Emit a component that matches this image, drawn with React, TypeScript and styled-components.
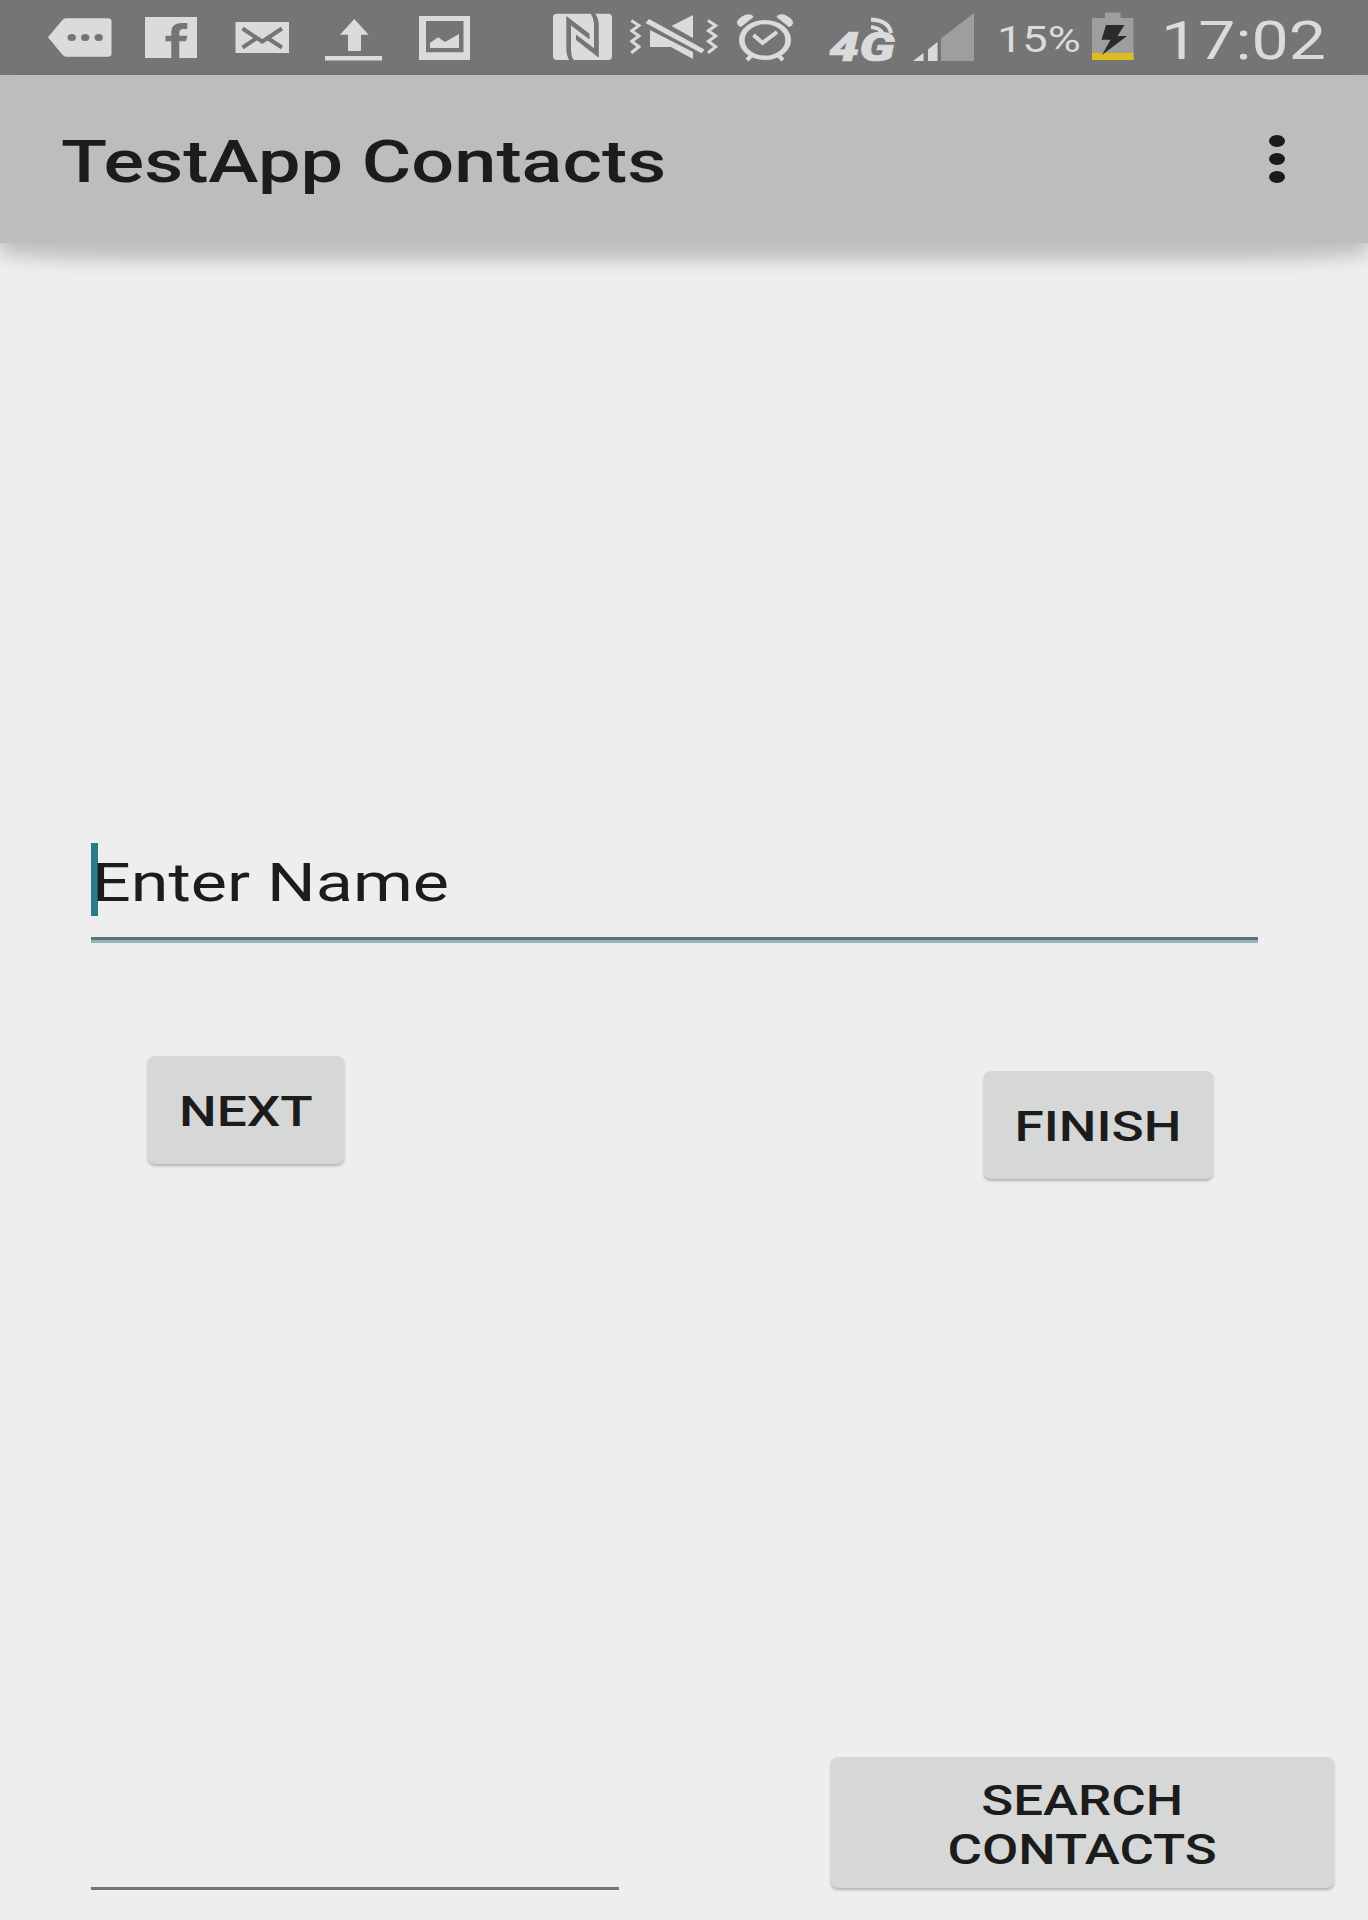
import React from 'react';
import styled, { createGlobalStyle } from 'styled-components';

const LIGHT = '#dbdbdb';
const BAR = '#757575';
const INK = '#1c1c1c';

const GlobalStyle = createGlobalStyle`
  *, *::before, *::after { box-sizing: border-box; }
  body { margin: 0; background: #eeeeee; }
`;

const Screen = styled.div`
  width: 1368px;
  height: 1920px;
  display: flex;
  flex-direction: column;
  overflow: hidden;
  background: #eeeeee;
  color: ${INK};
  font-family: Roboto, "Noto Sans", sans-serif;
`;

const StatusBar = styled.div`
  height: 75px;
  flex: none;
  display: flex;
  background: ${BAR};
  color: ${LIGHT};
`;

const Glyph = styled.svg<{ $gap: number }>`
  flex: none;
  height: 75px;
  margin-left: ${(p) => p.$gap}px;
`;

const Wide = styled.span<{ $origin?: string; $stretch?: number }>`
  display: inline-block;
  white-space: nowrap;
  transform: scaleX(${(p) => p.$stretch ?? 1.2667});
  transform-origin: ${(p) => p.$origin ?? 'left'} center;
`;

const StatusText = styled.div<{ $gap: number; $width: number; $size: number; $top: number }>`
  flex: none;
  margin-left: ${(p) => p.$gap}px;
  width: ${(p) => p.$width}px;
  padding-top: ${(p) => p.$top}px;
  font-size: ${(p) => p.$size}px;
  line-height: 60px;
`;

const AppBar = styled.header`
  position: relative;
  z-index: 0;
  height: 168px;
  flex: none;
  display: flex;
  justify-content: space-between;
  padding: 0 83px 0 61px;

  &::before {
    content: '';
    position: absolute;
    z-index: -1;
    inset: 0;
    background: #bdbdbd;
  }
  &::after {
    content: '';
    position: absolute;
    z-index: -2;
    inset: 0;
    border-radius: 0 0 140px 140px / 0 0 7px 7px;
    box-shadow: 0 15px 18px 2px rgba(0, 0, 0, 0.2);
  }
`;

const Title = styled.h1`
  margin: 0;
  padding-top: 5px;
  font-size: 60px;
  font-weight: 500;
  line-height: 163px;
`;

const MenuButton = styled.button`
  display: flex;
  flex-direction: column;
  gap: 6px;
  align-self: flex-start;
  margin: 60px 0 0;
  padding: 0;
  border: 0;
  background: none;
`;

const Dot = styled.span`
  width: 16px;
  height: 12px;
  border-radius: 50%;
  background: #1a1a1a;
`;

const Content = styled.main`
  flex: 1;
  display: flex;
  flex-direction: column;
  padding: 600px 0 30px;
`;

const NameField = styled.div`
  height: 100px;
  flex: none;
  margin: 0 110px 0 91px;
  display: flex;
  align-items: flex-start;
  border-bottom: 3px solid #97b3b8;
  box-shadow: inset 0 -3px 0 #53747b;
`;

const Caret = styled.span`
  width: 6.5px;
  height: 73px;
  margin-right: -6.5px;
  background: #2b7c8b;
`;

const Placeholder = styled.span`
  padding-left: 0.5px;
  font-size: 54px;
  line-height: 79px;
`;

const Actions = styled.div`
  display: flex;
  justify-content: space-between;
  align-items: flex-start;
  flex: none;
  margin: 113px 155px 0 147.5px;
`;

const Button = styled.button<{ $width: number; $height?: number; $drop?: number; $lift?: number }>`
  width: ${(p) => p.$width}px;
  height: ${(p) => p.$height ?? 108}px;
  margin: ${(p) => p.$drop ?? 0}px 0 ${(p) => p.$lift ?? 0}px;
  padding: ${(p) => (p.$lift ? 5 : 3)}px 0 0;
  border: 0;
  border-radius: 8px / 6px;
  background: #d6d8d7;
  box-shadow: 0 2px 3px rgba(0, 0, 0, 0.25);
  color: ${INK};
  font: 500 42px/49px Roboto, "Noto Sans", sans-serif;
  text-align: center;
`;

const Footer = styled.div`
  display: flex;
  justify-content: space-between;
  align-items: flex-end;
  margin: auto 34px 0 91px;
`;

const EmptyField = styled.div`
  width: 528px;
  height: 60px;
  border-bottom: 3px solid #757575;
`;

type IconProps = { x: number; w: number; gap: number; children: React.ReactNode };

// Status glyphs share the status bar's coordinate space; x is the left edge of the drawing.
const Icon = ({ x, w, gap, children }: IconProps) => (
  <Glyph $gap={gap} width={w} viewBox={`${x} 0 ${w} 75`} fill={LIGHT}>
    {children}
  </Glyph>
);

const ZIGZAG = 'l7.7 5l-7.3 5.3l7.3 5.2l-7.3 5.3l7.3 5.4l-7.7 6';

export default function App() {
  return (
    <>
      <GlobalStyle />
      <Screen>
        <StatusBar>
          <Icon x={48} w={64} gap={48}>
            <path d="M48 37.3L62 20.5Q64 18.3 66 18.3H108Q111.5 18.3 111.5 21.3V53.7Q111.5 56.7 108 56.7H66Q64 56.7 62 54.3Z" />
            <g fill={BAR}>
              <ellipse cx="71.7" cy="37.4" rx="4.2" ry="3.5" />
              <ellipse cx="85.2" cy="37.4" rx="4.2" ry="3.5" />
              <ellipse cx="98.7" cy="37.4" rx="4.2" ry="3.5" />
            </g>
          </Icon>
          <Icon x={145} w={52} gap={33}>
            <path d="M145 17H197V58H145Z" />
            <path
              fill={BAR}
              d="M171.3 58V41.3H165.5V35.7H171.3V32Q171.3 23 182 23H187.3V29H183.5Q179.3 29 179.3 32.5V35.7H187.3L186 41.3H179.3V58Z"
            />
          </Icon>
          <Icon x={235} w={54} gap={38}>
            <path d="M235.5 22H289V53H235.5Z" />
            <path
              d="M242.5 28.5L262.3 41.5L282 28.5M242.5 47.5L257 38M282 47.5L267.5 38"
              fill="none"
              stroke={BAR}
              strokeWidth="4"
            />
          </Icon>
          <Icon x={325} w={57} gap={36}>
            <path d="M354.3 19L368.7 34.7H361V51H348V34.7H340ZM325 56H382V60.5H325Z" />
          </Icon>
          <Icon x={419} w={51} gap={37}>
            <path
              fillRule="evenodd"
              d="M419 16H470V60H419ZM426 21V52.3H463.5V21ZM430 48V43L438 37.3L445 42L459 34V48Z"
            />
          </Icon>
          <Icon x={553} w={59} gap={83}>
            <rect x="553" y="13.7" width="59" height="46.3" rx="4" ry="4" />
            <g fill={BAR}>
              <path d="M566.3 16L589.5 33.8V39.5L571 25.5V48Q571 57 574 60.5H569.5Q566.3 56 566.3 48Z" />
              <path d="M598.8 57.7L576 40V34.5L594 48.3V26Q594 17 590 13H594.5Q598.8 17 598.8 26Z" />
            </g>
          </Icon>
          <Icon x={630} w={89} gap={18}>
            <path d={`M631.3 20.5${ZIGZAG}M708 20.5${ZIGZAG}`} fill="none" stroke={LIGHT} strokeWidth="3" />
            <path d="M671.5 26L693 15V38ZM649 19L704.5 49.5L701.5 53.3L645.5 23ZM650 30L693 52V59L671 47H650Z" />
          </Icon>
          <Icon x={736} w={58} gap={17}>
            <path
              fillRule="evenodd"
              d="M765 20A26 20 0 0 1 765 60A26 20 0 0 1 765 20ZM765 24.3A20.3 15.6 0 0 0 765 55.6A20.3 15.6 0 0 0 765 24.3Z"
            />
            <path d="M737 22Q739 17 746 14.5Q752 13.5 753.5 17L741 27Q737 26 737 22ZM793 22Q791 17 784 14.5Q778 13.5 776.5 17L789 27Q793 26 793 22Z" />
            <g fill="none" stroke={LIGHT} strokeWidth="4">
              <path d="M752 55L747 60M778 55L783 60" />
              <path d="M753.5 35L762.5 43L777 32" />
            </g>
          </Icon>
          <Icon x={826} w={72} gap={32}>
            <text
              x="829"
              y="60.5"
              fontFamily="Roboto, sans-serif"
              fontStyle="italic"
              fontWeight="900"
              fontSize="41"
              textLength="66"
              lengthAdjust="spacingAndGlyphs"
              stroke={LIGHT}
              strokeWidth="0.7"
            >
              4G
            </text>
            <path
              d="M871 19.5Q889 20.5 891 33M871 27Q880 28 882 33"
              fill="none"
              stroke={LIGHT}
              strokeWidth="4.2"
            />
          </Icon>
          <Icon x={913} w={61} gap={15}>
            <path d="M913 61L923.5 53V61ZM928 61V49.5L937.5 42V61Z" />
            <path d="M941 61V38.5L974 13V61Z" fill="#9e9e9e" />
          </Icon>
          <StatusText $gap={23} $width={95} $size={36} $top={9.5}>
            <Wide $stretch={1.253}>15%</Wide>
          </StatusText>
          <Icon x={1092} w={42} gap={0}>
            <path d="M1092 18H1105V12.5H1120.5V18H1133.5V60H1092Z" fill="#9e9e9e" />
            <path d="M1092 53H1133.5V60H1092Z" fill="#dcbc20" />
            <path d="M1106 25H1124.5L1117.5 36H1127L1102 55L1110.5 39.7H1101.5Z" fill="#2b2b2b" />
          </Icon>
          <StatusText $gap={27} $width={170} $size={54} $top={10.5}>
            <Wide $stretch={1.226}>17:02</Wide>
          </StatusText>
        </StatusBar>

        <AppBar>
          <Title>
            <Wide $stretch={1.262}>TestApp Contacts</Wide>
          </Title>
          <MenuButton aria-label="More options">
            <Dot />
            <Dot />
            <Dot />
          </MenuButton>
        </AppBar>

        <Content>
          <NameField>
            <Caret />
            <Placeholder>
              <Wide $stretch={1.264}>Enter Name</Wide>
            </Placeholder>
          </NameField>
          <Actions>
            <Button $width={196}>
              <Wide $origin="center">NEXT</Wide>
            </Button>
            <Button $width={229.5} $drop={15}>
              <Wide $origin="center">FINISH</Wide>
            </Button>
          </Actions>
          <Footer>
            <EmptyField />
            <Button $width={503} $height={131} $lift={2.5}>
              <Wide $origin="center" $stretch={1.257}>
                SEARCH
                <br />
                CONTACTS
              </Wide>
            </Button>
          </Footer>
        </Content>
      </Screen>
    </>
  );
}
